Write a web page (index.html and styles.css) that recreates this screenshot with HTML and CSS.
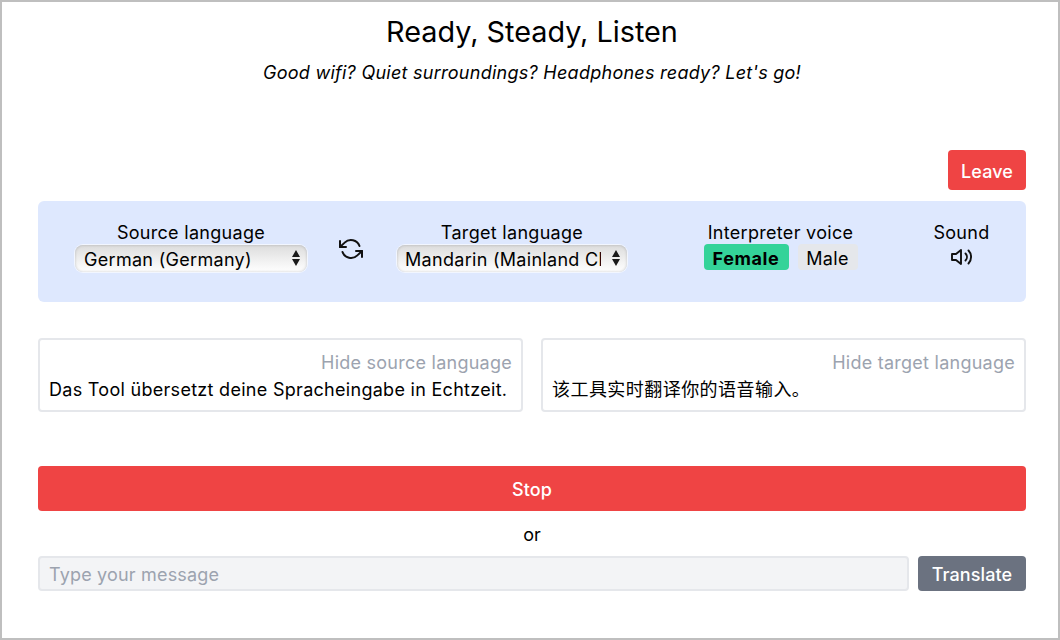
FILE: index.html
```html
<!DOCTYPE html>
<html lang="en">
<head>
<meta charset="utf-8">
<title>Ready, Steady, Listen</title>
<link rel="stylesheet" href="styles.css">
</head>
<body>
<div class="frame">
  <header class="head">
    <h1 class="title">Ready, Steady, Listen</h1>
    <p class="subtitle">Good wifi? Quiet surroundings? Headphones ready? Let's go!</p>
  </header>
  <div class="leave-row"><button class="btn btn-leave">Leave</button></div>
  <section class="panel">
    <div class="field field-source">
      <span class="label">Source language</span>
      <div class="select-wrap">
        <select class="select"><option>German (Germany)</option></select>
        <svg class="updown" viewBox="0 0 8 16" width="8" height="16"><path d="M4 0 L8 7 H0 Z M4 16 L0 9 H8 Z" fill="#1a1a1a"/></svg>
      </div>
    </div>
    <button class="swap" aria-label="Swap languages">
      <svg viewBox="0 0 24 24" width="24" height="24" fill="none" stroke="#111" stroke-width="2" stroke-linecap="round" stroke-linejoin="round"><path d="M1 4v6h6"/><path d="M23 20v-6h-6"/><path d="M20.49 9A9 9 0 0 0 5.64 5.64L1 10m22 4-4.64 4.36A9 9 0 0 1 3.51 15"/></svg>
    </button>
    <div class="field field-target">
      <span class="label">Target language</span>
      <div class="select-wrap select-wrap-target">
        <select class="select select-target"><option>Mandarin (Mainland China)</option></select>
        <svg class="updown" viewBox="0 0 8 16" width="8" height="16"><path d="M4 0 L8 7 H0 Z M4 16 L0 9 H8 Z" fill="#1a1a1a"/></svg>
      </div>
    </div>
    <div class="field field-voice">
      <span class="label">Interpreter voice</span>
      <div class="voices">
        <button class="voice voice-on">Female</button>
        <button class="voice voice-off">Male</button>
      </div>
    </div>
    <div class="field field-sound">
      <span class="label">Sound</span>
      <svg class="speaker" viewBox="0 0 24 24" width="24" height="24" fill="none" stroke="#111" stroke-width="1.9" stroke-linecap="round" stroke-linejoin="round"><path d="M11 5 6 9H2v6h4l5 4V5z"/><path d="M15.5 8.5a5 5 0 0 1 0 7"/><path d="M18.5 5.5a9.5 9.5 0 0 1 0 13"/></svg>
    </div>
  </section>
  <section class="boxes">
    <div class="box">
      <div class="hide">Hide source language</div>
      <div class="line">Das Tool übersetzt deine Spracheingabe in Echtzeit.</div>
    </div>
    <div class="box">
      <div class="hide">Hide target language</div>
      <div class="line line-zh">该工具实时翻译你的语音输入。</div>
    </div>
  </section>
  <button class="btn btn-stop">Stop</button>
  <div class="or">or</div>
  <form class="type-row">
    <input class="message" type="text" placeholder="Type your message">
    <button class="btn btn-translate" type="button">Translate</button>
  </form>
</div>
</body>
</html>
```
FILE: styles.css
```css
* { box-sizing: border-box; }
html, body { margin: 0; height: 100%; }
body {
  font-family: Inter, "Noto Sans CJK SC", sans-serif;
  font-size: 18px;
  line-height: 24px;
  color: #000;
  background: #fff;
}
button, input, select { font-family: inherit; margin: 0; }
.frame {
  width: 1060px;
  height: 640px;
  border: 2px solid #bfbfbf;
  padding: 0 32px 0 36px;
  display: flex;
  flex-direction: column;
  overflow: hidden;
}
.head { text-align: center; padding-top: 10px; }
.title { margin: 0; font-size: 28.8px; line-height: 40px; font-weight: 400; }
.subtitle { margin: 9px 0 0; font-size: 18px; line-height: 24px; font-style: italic; letter-spacing: .26px; }
.leave-row { display: flex; justify-content: flex-end; margin-top: 65px; }
.btn { border: 0; border-radius: 4px; color: #fff; font-size: 18px; font-weight: 500; letter-spacing: .1px; padding: 2px 0 0; }
.btn-leave { background: #ef4444; width: 78px; height: 40px; }
.panel {
  margin-top: 11px;
  height: 101px;
  background: #dee8fe;
  border-radius: 6px;
  display: flex;
  align-items: flex-start;
  padding-top: 20px;
}
.field { display: flex; flex-direction: column; align-items: center; }
.label { line-height: 24px; letter-spacing: .3px; }
.field-source { margin-left: 37px; width: 232px; }
.swap {
  border: 0; background: none; padding: 0;
  margin: 16px 0 0 32px;
  width: 24px; height: 24px;
}
.swap svg { display: block; }
.field-target { margin-left: 33px; width: 232px; }
.field-voice { margin-left: 75px; width: 155px; }
.field-sound { margin-left: 76px; width: 55px; }
.select-wrap { position: relative; width: 232px; height: 27px; margin-top: 0; }
.select-wrap-target { width: 230px; }
.select {
  appearance: none;
  -webkit-appearance: none;
  width: 100%;
  height: 100%;
  border: 0;
  border-radius: 8px;
  padding: 1px 26px 0 9px;
  font-size: 18px;
  letter-spacing: .3px;
  color: #000;
  background: linear-gradient(#dcdcdc, #f0f0f0 55%, #fff);
  box-shadow: inset 0 0 3px rgba(0,0,0,.2), 0 0 0 1px rgba(255,255,255,.6);
}
.select-target { padding-left: 8px; }
.updown { position: absolute; right: 7px; top: 5px; pointer-events: none; }
.voices { display: flex; gap: 9px; margin-top: -1px; }
.voice {
  border: 0; border-radius: 4px;
  height: 26px;
  padding: 2px 0 0;
  font-size: 18px;
  letter-spacing: .3px;
  background: #e5e7eb;
  color: #000;
}
.voice-on { background: #34d399; font-weight: 700; width: 85px; letter-spacing: .6px; }
.voice-off { width: 60px; }
.speaker { margin-top: 0; }
.boxes { display: flex; gap: 18px; margin-top: 36px; }
.box {
  flex: 1;
  height: 74px;
  border: 2px solid #e5e7eb;
  border-radius: 4px;
  padding: 10px 9px 0;
}
.hide { text-align: right; color: #9ca3af; line-height: 25px; letter-spacing: .25px; }
.line { line-height: 25px; margin-top: 2px; white-space: nowrap; letter-spacing: .29px; }
.line-zh { letter-spacing: .45px; }
.btn-stop { background: #ef4444; height: 45px; margin-top: 54px; width: 100%; }
.or { text-align: center; margin-top: 12px; line-height: 24px; }
.type-row { display: flex; gap: 9px; margin-top: 9px; }
.message {
  flex: 1;
  height: 35px;
  border: 2px solid #e5e7eb;
  border-radius: 4px;
  background: #f3f4f6;
  padding: 2px 9px 0;
  font-size: 18px;
  letter-spacing: .18px;
}
.message::placeholder { color: #9ca3af; opacity: 1; }
.btn-translate { background: #6b7280; width: 108px; height: 35px; }
```
